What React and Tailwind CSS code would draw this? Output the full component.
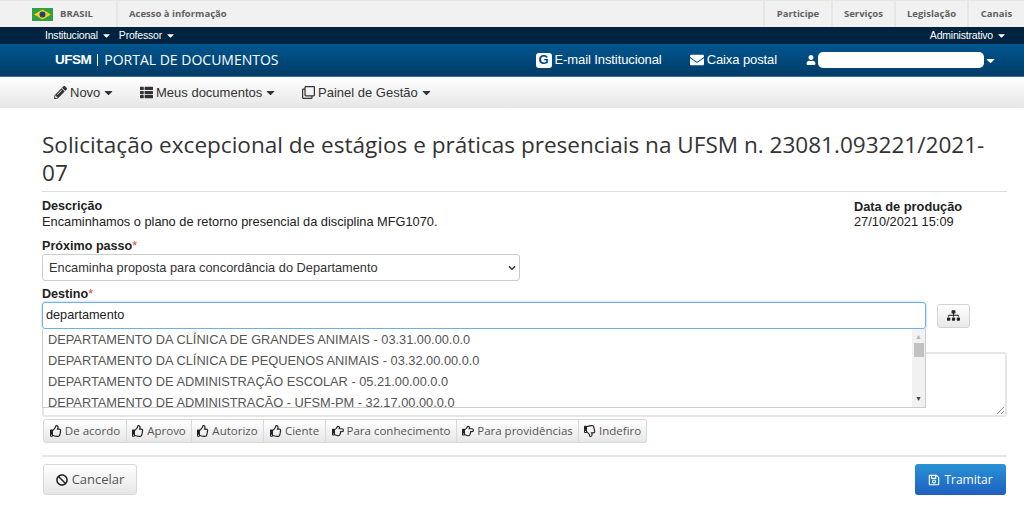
import { FaPencilAlt, FaThList, FaRegClone, FaEnvelope, FaUser, FaSitemap, FaRegThumbsUp, FaRegHandPointRight, FaRegThumbsDown, FaBan, FaRegSave, FaCaretDown, FaChevronDown } from "react-icons/fa";

const sans = "font-['Liberation_Sans',Arial,sans-serif]";
const open = "font-['Open_Sans',sans-serif]";

const SUGGESTIONS = [
  "DEPARTAMENTO DA CLÍNICA DE GRANDES ANIMAIS - 03.31.00.00.0.0",
  "DEPARTAMENTO DA CLÍNICA DE PEQUENOS ANIMAIS - 03.32.00.00.0.0",
  "DEPARTAMENTO DE ADMINISTRAÇÃO ESCOLAR - 05.21.00.00.0.0",
  "DEPARTAMENTO DE ADMINISTRAÇÃO - UFSM-PM - 32.17.00.00.0.0",
];

const ACTIONS = [
  { label: "De acordo", icon: FaRegThumbsUp, w: "w-[84px]" },
  { label: "Aprovo", icon: FaRegThumbsUp, w: "w-[65px]" },
  { label: "Autorizo", icon: FaRegThumbsUp, w: "w-[72px]" },
  { label: "Ciente", icon: FaRegThumbsUp, w: "w-[62px]" },
  { label: "Para conhecimento", icon: FaRegHandPointRight, w: "w-[131px]" },
  { label: "Para providências", icon: FaRegHandPointRight, w: "w-[122px]" },
  { label: "Indefiro", icon: FaRegThumbsDown, w: "w-[68px]" },
];

function BarraBrasil() {
  return (
    <div className={`h-[27px] bg-[#f1f1f1] border-t border-[#e6e6e6] flex text-[9.5px] font-bold text-[#606060] ${open}`}>
      <div className="w-[118px] flex items-center gap-[7px] pl-[32px] border-r-2 border-[#e6e6e6]">
        <svg width="21" height="13" viewBox="0 0 21 13">
          <rect width="21" height="13" fill="#2f9e44" />
          <path d="M10.5 1.5 19 6.5 10.5 11.5 2 6.5Z" fill="#f7d308" />
          <circle cx="10.5" cy="6.5" r="3" fill="#1d3f8f" />
        </svg>
        <span>BRASIL</span>
      </div>
      <span className="ml-[11px] self-center">Acesso à informação</span>
      <div className="ml-auto flex">
        <span className="w-[68px] flex items-center justify-center border-l-2 border-[#e6e6e6]">Participe</span>
        <span className="w-[63px] flex items-center justify-center border-l-2 border-[#e6e6e6]">Serviços</span>
        <span className="w-[73px] flex items-center justify-center border-l-2 border-[#e6e6e6]">Legislação</span>
        <span className="w-[57px] flex items-center justify-center border-l-2 border-[#e6e6e6]">Canais</span>
      </div>
    </div>
  );
}

function Cabecalho() {
  return (
    <div className={`${sans} text-white`}>
      <div className="h-[17px] bg-[#00233f] flex items-center pl-[45px] pr-[17px] text-[10.5px] tracking-[-0.2px]">
        <span className="flex items-center gap-[3px]">Institucional <FaCaretDown size={11} /></span>
        <span className="flex items-center gap-[3px] ml-[7px]">Professor <FaCaretDown size={11} /></span>
        <span className="flex items-center gap-[3px] ml-auto">Administrativo <FaCaretDown size={11} /></span>
      </div>
      <div className="h-[33px] bg-gradient-to-b from-[#00568f] to-[#003c68] border-b border-[#336f9a] flex items-center pl-[55px]">
        <span className="text-[13.5px] font-bold tracking-[-0.5px]">UFSM</span>
        <span className="w-px h-[12px] bg-white mx-[6px]" />
        <span className={`text-[14px] pb-[2px] ${open}`}>PORTAL DE DOCUMENTOS</span>
        <div className="ml-auto flex items-center text-[13px]">
          <span className="w-[16px] h-[15px] rounded-[3px] bg-white flex items-center justify-center text-[#00477a] text-[13px] font-bold mr-[3px]">G</span>
          <span className="tracking-[-0.1px]">E-mail Institucional</span>
          <FaEnvelope size={14} className="ml-[28px] mr-[3px]" />
          <span className="tracking-[-0.1px]">Caixa postal</span>
          <FaUser size={10} className="ml-[29px] mr-[2px]" />
          <span className="w-[166px] h-[16px] bg-white rounded-[5px]" />
          <FaCaretDown size={13} />
          <span className="w-[27px]" />
        </div>
      </div>
    </div>
  );
}

function MenuItem({ icon: Icon, label, w }) {
  return (
    <span className={`flex items-center ${w}`}>
      <Icon size={13} className="mr-[3px]" />
      {label}
      <FaCaretDown size={13} className="ml-[2px]" />
    </span>
  );
}

function Menu() {
  return (
    <div className={`h-[31px] bg-gradient-to-b from-white to-[#e6e6e6] flex items-center pl-[54px] text-[13px] text-[#333] ${sans}`}>
      <MenuItem icon={FaPencilAlt} label="Novo" w="w-[86px]" />
      <MenuItem icon={FaThList} label="Meus documentos" w="w-[162px]" />
      <MenuItem icon={FaRegClone} label="Painel de Gestão" w="w-[140px]" />
    </div>
  );
}

function Rotulo({ children }) {
  return (
    <div className="text-[12.6px] font-bold text-[#222] leading-[14px]">
      {children}<span className="text-[#e0403a] font-normal">*</span>
    </div>
  );
}

export default function App() {
  return (
    <div className="w-[1024px] h-[510px] overflow-hidden bg-white">
      <BarraBrasil />
      <Cabecalho />
      <Menu />

      <div className={`mx-[42px] w-[965px] ${sans}`}>
        <h1 className={`pt-[23px] pb-[4px] text-[22.55px] leading-[28px] text-[#333] border-b border-[#ddd] ${open}`}>
          Solicitação excepcional de estágios e práticas presenciais na UFSM n. 23081.093221/2021-07
        </h1>

        <div className="flex pt-[7px] text-[12.8px] leading-[16px] text-[#222]">
          <div className="flex-1">
            <div className="font-bold text-[12.6px] leading-[15px]">Descrição</div>
            <div>Encaminhamos o plano de retorno presencial da disciplina MFG1070.</div>
          </div>
          <div className="w-[153px]">
            <div className="font-bold text-[12.8px] leading-[15px]">Data de produção</div>
            <div>27/10/2021 15:09</div>
          </div>
        </div>

        <div className="pt-[9px]">
          <Rotulo>Próximo passo</Rotulo>
        </div>
        <div className="mt-[1px] w-[478px] h-[27px] border border-[#ccc] rounded-[3px] flex items-center justify-between pl-[6px] pr-[3px] text-[12.8px] text-[#333]">
          Encaminha proposta para concordância do Departamento
          <FaChevronDown size={8} className="text-[#222]" />
        </div>

        <div className="pt-[6px]">
          <Rotulo>Destino</Rotulo>
        </div>
        <div className="relative mt-[1px]">
          <div className="flex items-center">
            <div className="w-[884px] h-[27px] border border-[#70b0e0] rounded-[3px] flex items-center pl-[3px] text-[12.7px] text-[#222] shadow-[0_0_3px_#a0cdf0]">
              departamento
            </div>
            <div className="ml-[11px] w-[33px] h-[24px] border border-[#d4d4d4] rounded-[3px] bg-gradient-to-b from-white to-[#e8e8e8] flex items-center justify-center text-[#222]">
              <FaSitemap size={13} />
            </div>
          </div>

          {/* lista do autocomplete, fica por cima da textarea */}
          <div className="absolute left-0 top-[27px] z-10 w-[884px] h-[79px] bg-white border border-[#ccc] border-t-0 flex">
            <div className="flex-1 pl-[5px] text-[12.8px] leading-[21px] text-[#555] overflow-hidden">
              {SUGGESTIONS.map(s => <div key={s}>{s}</div>)}
            </div>
            <div className="w-[13px] bg-[#f1f1f1] flex flex-col items-center">
              <span className="mt-[3px] text-[#b5b5b5] text-[7px] leading-[10px]">▲</span>
              <span className="mt-[1px] w-[10px] h-[14px] bg-[#c1c1c1]" />
              <span className="mt-auto mb-[3px] text-[#444] text-[7px] leading-[10px]">▼</span>
            </div>
          </div>
        </div>

        <div className="relative mt-[23px] h-[65px] border-2 border-[#e6e6e6] rounded-[3px]">
          <svg className="absolute right-0 bottom-0" width="9" height="9" viewBox="0 0 9 9">
            <path d="M1 8 8 1M5 8 8 5" stroke="#888" strokeWidth="1" />
          </svg>
        </div>

        <div className={`mt-[2px] ml-px flex text-[11.5px] text-[#555] ${open}`}>
          {ACTIONS.map((a, i) => (
            <span key={a.label} className={`${a.w} h-[24px] flex items-center justify-center gap-[3px] border border-[#d8d8d8] bg-gradient-to-b from-white to-[#e6e6e6] ${i > 0 ? "border-l-0" : "rounded-l-[3px]"} ${i === ACTIONS.length - 1 ? "rounded-r-[3px]" : ""}`}>
              <a.icon size={12} className="text-[#222]" />
              {a.label}
            </span>
          ))}
        </div>

        <div className="mt-[12px] border-t-2 border-[#e6e6e6] flex justify-between pt-[7px]">
          <div className={`ml-px w-[94px] h-[31px] border border-[#d8d8d8] rounded-[3px] bg-gradient-to-b from-white to-[#e6e6e6] flex items-center justify-center gap-[4px] text-[13px] text-[#555] ${open}`}>
            <FaBan size={12} className="text-[#222]" />
            Cancelar
          </div>
          <div className={`mr-px w-[91px] h-[31px] rounded-[3px] bg-gradient-to-b from-[#2a93d5] to-[#1f5fc0] flex items-center justify-center gap-[4px] text-[12px] text-white ${open}`}>
            <FaRegSave size={12} />
            Tramitar
          </div>
        </div>
      </div>
    </div>
  );
}
